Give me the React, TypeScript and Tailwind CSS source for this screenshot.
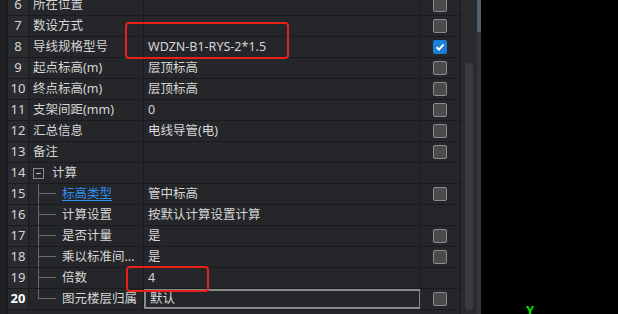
import React from 'react';

type Row = {
  no: number;
  name: string;
  value?: string;
  check?: 'on' | 'off';
  tree?: 'mid' | 'last';
  group?: boolean;
  link?: boolean;
};

const rows: Row[] = [
  { no: 6, name: '所在位置', check: 'off' },
  { no: 7, name: '数设方式', check: 'off' },
  { no: 8, name: '导线规格型号', value: 'WDZN-B1-RYS-2*1.5', check: 'on' },
  { no: 9, name: '起点标高(m)', value: '层顶标高', check: 'off' },
  { no: 10, name: '终点标高(m)', value: '层顶标高', check: 'off' },
  { no: 11, name: '支架间距(mm)', value: '0', check: 'off' },
  { no: 12, name: '汇总信息', value: '电线导管(电)', check: 'off' },
  { no: 13, name: '备注', check: 'off' },
  { no: 14, name: '计算', group: true },
  { no: 15, name: '标高类型', value: '管中标高', check: 'off', tree: 'mid', link: true },
  { no: 16, name: '计算设置', value: '按默认计算设置计算', tree: 'mid' },
  { no: 17, name: '是否计量', value: '是', check: 'off', tree: 'mid' },
  { no: 18, name: '乘以标准间...', value: '是', check: 'off', tree: 'mid' },
  { no: 19, name: '倍数', value: '4', tree: 'mid' },
  { no: 20, name: '图元楼层归属', value: '默认', check: 'off', tree: 'last' },
];

const CheckBox = ({ on }: { on: boolean }) =>
  on ? (
    <div className="w-[14px] h-[14px] rounded-[2px] bg-[#1a7fd6] flex items-center justify-center">
      <svg width="10" height="10" viewBox="0 0 10 10">
        <path d="M1.5 5.2 L4 7.6 L8.6 2.4" stroke="#fff" strokeWidth="2" fill="none" />
      </svg>
    </div>
  ) : (
    <div className="w-[14px] h-[14px] rounded-[2px] bg-[#4a4b4d] border border-[#8c8c8c]" />
  );

const Tree = ({ kind }: { kind: 'mid' | 'last' }) => (
  <div className="ml-[9px] w-[18px] self-stretch flex flex-col">
    <div className="h-[10px] border-l border-b border-[#6b6b6b]" />
    <div className={kind === 'mid' ? 'flex-1 border-l border-[#6b6b6b]' : 'flex-1'} />
  </div>
);

const App = () => {
  return (
    <div
      className="relative w-[618px] h-[314px] overflow-hidden bg-black text-[12.5px] text-[#d6d6d6]"
      style={{ fontFamily: '"Noto Sans", "Noto Sans CJK SC", sans-serif' }}
    >
      <div className="flex h-full">
        <div className="w-[8px] bg-[#1e1f22] border-r border-[#18191b]" />
        <div className="w-[452px] bg-[#252629] -mt-[5px]">
          {rows.map((r) => (
            <div key={r.no} className="flex h-[21px] border-b border-[#1a1b1d]">
              <div
                className={
                  'w-[21px] bg-[#2a2b2e] border-r border-[#1a1b1d] flex items-center justify-center text-[13px] ' +
                  (r.no === 20 ? 'font-bold text-white' : '')
                }
              >
                {r.no}
              </div>
              <div className="w-[115px] border-r border-[#1a1b1d] flex items-center whitespace-nowrap overflow-hidden">
                {r.tree && <Tree kind={r.tree} />}
                {r.group && (
                  <>
                    <div className="ml-[4px] w-[11px] h-[11px] border border-[#8c8c8c] flex items-center justify-center">
                      <div className="w-[5px] h-px bg-[#bdbdbd]" />
                    </div>
                    <span className="ml-[8px]">{r.name}</span>
                  </>
                )}
                {!r.group && (
                  <span
                    className={
                      (r.tree ? 'ml-[6px] ' : 'ml-[4px] ') +
                      (r.link ? 'text-[#2e8ff0] underline underline-offset-2' : '')
                    }
                  >
                    {r.name}
                  </span>
                )}
              </div>
              <div
                className={
                  'w-[276px] border-r border-[#1a1b1d] flex items-center pl-[4px] whitespace-nowrap ' +
                  (r.no === 20 ? 'border-2 border-[#8a8a8a] pl-[2px]' : '')
                }
              >
                {r.value}
              </div>
              <div className="w-[40px] flex items-center justify-center">
                {r.check && <CheckBox on={r.check === 'on'} />}
              </div>
            </div>
          ))}
        </div>
        <div className="w-[17px] bg-[#2a2b2e] border-l border-[#1a1b1d] flex justify-center pt-[63px] pb-[4px]">
          <div className="w-[8px] h-[247px] rounded-full bg-[#3b3c40]" />
        </div>
        <div className="w-[4px] bg-[#333538] flex flex-col">
          <div className="h-[32px] bg-[#55606c]" />
        </div>
        <div className="flex-1 bg-black" />
      </div>

      <div className="absolute left-[125px] top-[22px] w-[164px] h-[37px] border-2 border-[#e8201a] rounded-[4px]" />
      <div className="absolute left-[126px] top-[266px] w-[83px] h-[26px] border-2 border-[#e8201a] rounded-[4px]" />
      <div className="absolute left-[526px] top-[301px] text-[#00e000] text-[13px] font-bold">Y</div>
    </div>
  );
};

export default App;
